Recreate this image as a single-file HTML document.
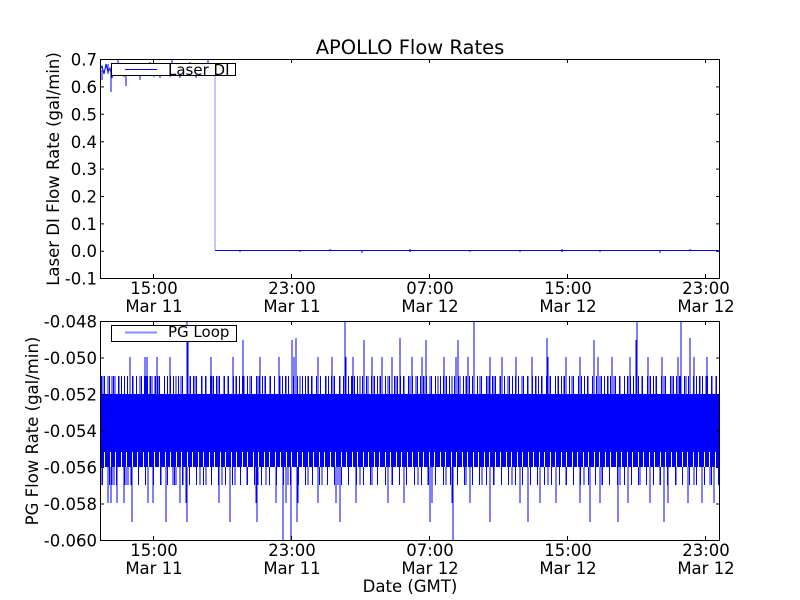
<!DOCTYPE html>
<html><head><meta charset="utf-8"><style>
html,body{margin:0;padding:0;background:#fff;}
svg{display:block;font-family:"DejaVu Sans","Liberation Sans",sans-serif;}
</style></head><body>
<svg width="800" height="600" viewBox="0 0 800 600" xmlns="http://www.w3.org/2000/svg">
<defs>
<pattern id="p1" x="100" y="0" width="23" height="10" patternUnits="userSpaceOnUse">
<path d="M1.5,0V10M4.5,0V10M9.5,0V10M13.5,0V10M18.5,0V10M21.5,0V10" stroke="#0000ff" stroke-width="1"/>
</pattern>
<pattern id="p2" x="100" y="0" width="11" height="10" patternUnits="userSpaceOnUse">
<rect x="0" y="0" width="4" height="10" fill="#0000ff"/><rect x="5" y="0" width="5" height="10" fill="#0000ff"/>
</pattern>
<pattern id="p3" x="100" y="0" width="29" height="10" patternUnits="userSpaceOnUse">
<path d="M2.5,0V10M9.5,0V10M16.5,0V10M24.5,0V10" stroke="#0000ff" stroke-width="1"/>
</pattern>
</defs>
<rect width="800" height="600" fill="#fff"/>
<text x="410" y="54" font-size="19.5" text-anchor="middle">APOLLO Flow Rates</text>

<!-- TOP AXES data -->
<g stroke="#0000ff" stroke-width="1" fill="none">
<path d="M100,70 L102,66 104,74 106,64 108,72 110,68 112,78 114,66 116,70 118,74 120,64 122,70 124,76 126,68 128,72 130,66 132,74 134,70 136,68 138,76 140,66 142,72 144,70 146,74 148,68 150,72 152,70 154,76 156,68 158,72 160,70 162,74 164,68 166,72 168,70 170,76 172,68 174,72 176,70 178,74 180,68 182,72 184,70 186,74 188,68 190,72 192,70 194,74 196,68 198,72 200,70 202,74 204,68 206,72 208,70 210,74 212,70 214,72"/>
<path d="M102,70V80 M111,70V92 M126,70V86 M140,70V80 M160,70V78 M180,70V78 M196,70V78 M108,64V74 M118,60V74 M150,62V70 M172,60V70 M190,62V70 M208,60V70"/>
</g>
<path d="M215,72 V250" stroke="#8888ff" stroke-width="1"/>
<path d="M215,250.5 H720" stroke="#0000ff" stroke-width="1"/>
<path d="M240,250V252 M300,250V252 M330,249V251 M362,250V253 M410,249V252 M470,250V252 M520,250V252 M562,249V252 M600,250V252 M660,250V253 M690,249V251" stroke="#0000ff" stroke-width="1"/>

<!-- top legend -->
<rect x="111.5" y="63.5" width="124" height="12" fill="#fff" stroke="#000"/>
<line x1="125" y1="69.5" x2="157" y2="69.5" stroke="#0000ff"/>
<text x="168" y="75" font-size="15">Laser DI</text>

<!-- top frame -->
<rect x="100.5" y="59.5" width="619" height="219" fill="none" stroke="#000"/>
<g stroke="#000">
<path d="M100,59.5h4M100,86.9h4M100,114.3h4M100,141.7h4M100,169.1h4M100,196.5h4M100,223.9h4M100,251.3h4M100,278.5h4"/>
<path d="M720,59.5h-4M720,86.9h-4M720,114.3h-4M720,141.7h-4M720,169.1h-4M720,196.5h-4M720,223.9h-4M720,251.3h-4"/>
<path d="M153.5,278v-4M291.5,278v-4M429.5,278v-4M567.5,278v-4M705.5,278v-4M153.5,59v4M291.5,59v4M429.5,59v4M567.5,59v4M705.5,59v4"/>
</g>
<g font-size="16.5" text-anchor="end">
<text x="97" y="65.5">0.7</text><text x="97" y="93">0.6</text><text x="97" y="120.5">0.5</text><text x="97" y="148">0.4</text><text x="97" y="175">0.3</text><text x="97" y="202.5">0.2</text><text x="97" y="230">0.1</text><text x="97" y="257">0.0</text><text x="97" y="284.5">-0.1</text>
</g>
<g font-size="16.5" text-anchor="middle">
<text x="154" y="294">15:00</text><text x="154" y="312">Mar 11</text>
<text x="292" y="294">23:00</text><text x="292" y="312">Mar 11</text>
<text x="430" y="294">07:00</text><text x="430" y="312">Mar 12</text>
<text x="568" y="294">15:00</text><text x="568" y="312">Mar 12</text>
<text x="706" y="294">23:00</text><text x="706" y="312">Mar 12</text>
</g>
<text transform="translate(59,169) rotate(-90)" font-size="16.5" text-anchor="middle">Laser DI Flow Rate (gal/min)</text>

<!-- BOTTOM AXES data -->
<rect x="100" y="376" width="620" height="18" fill="url(#p1)"/>
<rect x="100" y="394" width="620" height="58" fill="#0000ff"/>
<rect x="100" y="452" width="620" height="15" fill="url(#p2)"/>
<rect x="100" y="467" width="620" height="18" fill="url(#p3)"/>
<g stroke="#0000ff" stroke-width="1">
<path d="M102,376V394M104,376V394M108,376V394M112,376V394M115,376V394M119,376V394M130,376V394M133,376V394M140,376V394M146,376V394M150,376V394M152,376V394M155,376V394M158,376V394M170,376V394M176,376V394M181,376V394M190,376V394M195,376V394M202,376V394M206,376V394M212,376V394M218,376V394M224,376V394M228,376V394M236,376V394M244,376V394M250,376V394M258,376V394M265,376V394M270,376V394M280,376V394M286,376V394M292,376V394M300,376V394M308,376V394M312,376V394M318,376V394M326,376V394M334,376V394M340,376V394M346,376V394M352,376V394M360,376V394M368,376V394M374,376V394M380,376V394M388,376V394M396,376V394M404,376V394M410,376V394M416,376V394M424,376V394M430,376V394M438,376V394M446,376V394M452,376V394M460,376V394M466,376V394M474,376V394M480,376V394M488,376V394M494,376V394M500,376V394M508,376V394M516,376V394M522,376V394M528,376V394M536,376V394M542,376V394M550,376V394M558,376V394M564,376V394M572,376V394M580,376V394M588,376V394M594,376V394M600,376V394M608,376V394M614,376V394M620,376V394M628,376V394M636,376V394M642,376V394M650,376V394M656,376V394M664,376V394M672,376V394M680,376V394M686,376V394M694,376V394M700,376V394M706,376V394M712,376V394M716,376V394"/>
<path d="M130,357V394M145,357V394M147,357V394M157,357V394M170,357V394M211,357V394M233,357V394M260,357V394M279,357V394M294,357V394M318,357V394M332,357V394M346,357V394M353,357V394M372,357V394M382,357V394M392,357V394M412,357V394M422,357V394M444,357V394M456,357V394M468,357V394M490,357V394M502,357V394M516,357V394M532,357V394M548,357V394M566,357V394M580,357V394M598,357V394M612,357V394M630,357V394M648,357V394M662,357V394M678,357V394M694,357V394M707,357V394"/>
<path d="M188,340V394M243,340V394M292,340V394M296,338V394M364,340V394M400,338V394M426,340V394M458,340V394M547,338V394M594,340V394M636,340V394M690,338V394"/>
<path d="M187,321V394M345,321V394M474,321V394M637,321V394M681,321V394"/>
<path d="M102,467V485M112,467V485M114,467V485M117,467V485M126,467V485M128,467V485M131,467V485M161,467V485M173,467V485M176,467V485M183,467V485M200,467V485M206,467V485M222,467V485M235,467V485M247,467V485M258,467V485M266,467V485M288,467V485M308,467V485M322,467V485M338,467V485M360,467V485M372,467V485M392,467V485M418,467V485M428,467V485M446,467V485M466,467V485M482,467V485M494,467V485M512,467V485M528,467V485M548,467V485M566,467V485M584,467V485M602,467V485M620,467V485M640,467V485M660,467V485M676,467V485M694,467V485M710,467V485"/>
<path d="M108,467V503M111,467V503M117,467V503M124,467V503M148,467V503M153,467V503M180,467V503M186,467V503M219,467V503M256,467V503M276,467V503M286,467V503M298,467V503M318,467V503M336,467V503M356,467V503M388,467V503M404,467V503M432,467V503M452,467V503M470,467V503M490,467V503M520,467V503M540,467V503M556,467V503M580,467V503M600,467V503M628,467V503M650,467V503M668,467V503M688,467V503M702,467V503M714,467V503"/>
<path d="M132,467V522M166,467V522M187,467V522M230,467V522M257,467V522M297,467V522M340,467V522M430,467V522M490,467V522M528,467V522M590,467V522M618,467V522M664,467V522"/>
<path d="M283,467V540M291,467V540M453,467V540"/>
</g>

<!-- bottom legend -->
<rect x="111.5" y="325.5" width="125" height="16" fill="#fff" stroke="#000"/>
<line x1="125" y1="332.5" x2="157" y2="332.5" stroke="#8888ff" stroke-width="2"/>
<text x="168" y="337" font-size="15">PG Loop</text>

<!-- bottom frame -->
<rect x="100.5" y="321.5" width="619" height="219" fill="none" stroke="#000"/>
<g stroke="#000">
<path d="M100,321.5h4M100,358h4M100,394.5h4M100,431h4M100,467.5h4M100,504h4M100,540.5h4"/>
<path d="M720,321.5h-4M720,358h-4M720,394.5h-4M720,431h-4M720,467.5h-4M720,504h-4"/>
<path d="M153.5,540v-4M291.5,540v-4M429.5,540v-4M567.5,540v-4M705.5,540v-4M153.5,321v4M291.5,321v4M429.5,321v4M567.5,321v4M705.5,321v4"/>
</g>
<g font-size="16.5" text-anchor="end">
<text x="97" y="327.5">-0.048</text><text x="97" y="364">-0.050</text><text x="97" y="400.5">-0.052</text><text x="97" y="437">-0.054</text><text x="97" y="473.5">-0.056</text><text x="97" y="510">-0.058</text><text x="97" y="546.5">-0.060</text>
</g>
<g font-size="16.5" text-anchor="middle">
<text x="154" y="556">15:00</text><text x="154" y="574">Mar 11</text>
<text x="292" y="556">23:00</text><text x="292" y="574">Mar 11</text>
<text x="430" y="556">07:00</text><text x="430" y="574">Mar 12</text>
<text x="568" y="556">15:00</text><text x="568" y="574">Mar 12</text>
<text x="706" y="556">23:00</text><text x="706" y="574">Mar 12</text>
<text x="410" y="592">Date (GMT)</text>
</g>
<text transform="translate(38,431) rotate(-90)" font-size="16.5" text-anchor="middle">PG Flow Rate (gal/min)</text>
</svg>
</body></html>
